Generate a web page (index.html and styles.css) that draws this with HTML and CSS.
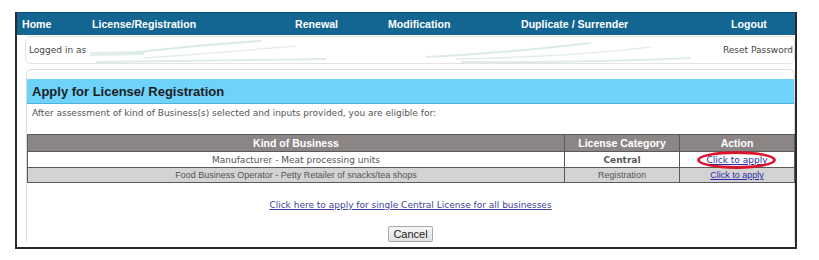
FILE: index.html
```html
<!DOCTYPE html>
<html>
<head>
<meta charset="utf-8">
<link rel="stylesheet" href="styles.css">
</head>
<body>
<div class="frame">
  <nav class="nav">
    <span class="nav-item first">Home</span>
    <span class="nav-item">License/Registration</span>
    <span class="nav-item">Renewal</span>
    <span class="nav-item">Modification</span>
    <span class="nav-item">Duplicate / Surrender</span>
    <span class="nav-item">Logout</span>
  </nav>
  <div class="body">
    <div class="login-bar">
      <svg class="swoosh" width="770" height="28" viewBox="0 0 770 28">
        <path d="M64 15 L118 14 L118 18 L64 19 Z" fill="#e2eee9"/>
        <path d="M100 17 Q150 10 235 4" stroke="#dceae4" stroke-width="2" fill="none"/>
        <path d="M118 21 Q190 16 270 9" stroke="#e3eeea" stroke-width="1.5" fill="none"/>
        <path d="M70 25 Q180 24 300 22" stroke="#dfebe6" stroke-width="2" fill="none"/>
        <path d="M400 20 Q480 16 565 6" stroke="#ddebe5" stroke-width="2" fill="none"/>
        <path d="M430 22 Q540 20 625 10" stroke="#e3eeea" stroke-width="1.5" fill="none"/>
        <path d="M435 25 Q560 26 665 21" stroke="#dfebe6" stroke-width="2" fill="none"/>
      </svg>
      <span class="login-text">Logged in as</span>
      <span class="login-text">Reset Password</span>
    </div>
    <div class="panel">
      <div class="panel-head">Apply for License/ Registration</div>
      <div class="panel-sub">After assessment of kind of Business(s) selected and inputs provided, you are eligible for:</div>
      <table class="grid">
        <tr class="head">
          <th class="c1">Kind of Business</th>
          <th class="c2">License Category</th>
          <th class="c3">Action</th>
        </tr>
        <tr class="row-a">
          <td>Manufacturer - Meat processing units</td>
          <td class="bold">Central</td>
          <td class="action"><a href="#">Click to apply</a><span class="ring"></span></td>
        </tr>
        <tr class="row-b">
          <td>Food Business Operator - Petty Retailer of snacks/tea shops</td>
          <td>Registration</td>
          <td><a href="#">Click to apply</a></td>
        </tr>
      </table>
      <div class="single"><a href="#">Click here to apply for single Central License for all businesses</a></div>
      <div class="actions"><button class="btn">Cancel</button></div>
    </div>
  </div>
</div>
</body>
</html>
```
FILE: styles.css
```css
html, body { margin: 0; padding: 0; background: #fff; }
body { font-family: "DejaVu Sans", Verdana, sans-serif; font-size: 9px; color: #555; }

.frame {
  margin: 12px 0 0 15px;
  width: 778px;
  border: 2px solid #2a2a2a;
  border-top: 0;
  height: 235px;
  overflow: hidden;
}

.nav {
  display: grid;
  grid-template-columns: 75px 203px 93px 133px 210px 64px;
  height: 23px;
  align-items: center;
  background: #136592;
  border-top: 1px solid #0e4f74;
  box-sizing: border-box;
}
.nav-item {
  font-family: "Liberation Sans", Arial, sans-serif;
  font-weight: bold;
  font-size: 10.6px;
  color: #fff;
}
.nav-item.first { padding-left: 5px; }

.body { padding: 1px 0 0 8px; }

.login-bar {
  position: relative;
  height: 26px;
  border: 1px solid #e3e3e3;
  border-radius: 6px;
  display: flex;
  justify-content: space-between;
  align-items: center;
  padding: 0 1px 0 3px;
  color: #444;
}
.login-text { position: relative; z-index: 1; }
.swoosh { position: absolute; left: 0; top: 0; }

.panel {
  margin: 5px 0 0 1px;
  border: 1px solid #dcdcdc;
  border-bottom: 0;
  border-radius: 6px 6px 0 0;
  padding-top: 9px;
}
.panel-head {
  height: 24px;
  background: #6dd3fb;
  border-bottom: 1px solid #4fb2d6;
  font-family: "Liberation Sans", Arial, sans-serif;
  font-weight: bold;
  font-size: 13px;
  color: #1d1d1d;
  line-height: 25px;
  padding-left: 5px;
}
.panel-sub {
  padding: 3px 0 0 5px;
  height: 13px;
  line-height: 12px;
}

.grid {
  margin-top: 14px;
  width: 768px;
  border-collapse: collapse;
  border: 1px solid #4a4a4a;
}
.grid th, .grid td {
  border: 1px solid #5a5a5a;
  text-align: center;
  padding: 0;
}
.grid .c1 { width: 536px; }
.grid .c2 { width: 114px; }
.head th {
  background: #8b8585;
  color: #fff;
  font-family: "Liberation Sans", Arial, sans-serif;
  font-size: 10.5px;
  font-weight: bold;
  height: 16px;
}
.row-a td { background: #fff; height: 15px; color: #555; }
.row-a .bold { font-weight: bold; }
.row-b td {
  background: #d3d3d3;
  height: 14px;
  font-family: "Liberation Sans", Arial, sans-serif;
  font-size: 9px;
  color: #555;
}
.grid a { color: #2b2ba6; }
.action { position: relative; }
.ring {
  position: absolute;
  left: 17px;
  top: -1px;
  width: 73px;
  height: 12px;
  border: 3px solid #d8152b;
  border-radius: 50%;
}

.single {
  text-align: center;
  margin-top: 16px;
  line-height: 12px;
}
.single a { color: #3f3f9c; }

.actions { text-align: center; margin-top: 15px; }
.btn {
  font-family: "Liberation Sans", Arial, sans-serif;
  font-size: 11px;
  color: #222;
  height: 16px;
  padding: 0 4px;
  border: 1px solid #a9a9a9;
  border-radius: 2px;
  background: linear-gradient(#f7f7f7, #e2e2e2);
  line-height: 13px;
}
```
